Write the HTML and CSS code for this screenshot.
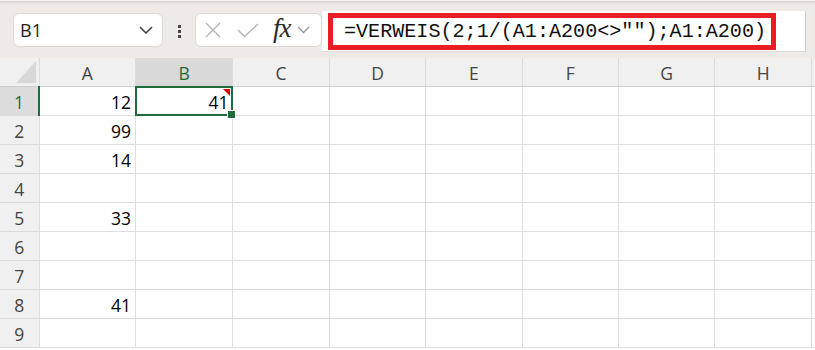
FILE: index.html
```html
<!DOCTYPE html>
<html lang="de">
<head>
    <meta charset="UTF-8">
    <meta name="viewport" content="width=device-width, initial-scale=1.0">
    <title>Tabelle</title>
    <link rel="stylesheet" href="styles.css">
</head>
<body>
    <div class="toolbar">
        <div class="namebox">
            <span class="cellref">B1</span>
            <svg class="chevron" width="14" height="8" viewBox="0 0 14 8"><path d="M1 1 L7 7 L13 1" fill="none" stroke="#444" stroke-width="1.6"/></svg>
        </div>
        <div class="dots"><span></span><span></span><span></span></div>
        <div class="fxbox">
            <svg width="16" height="16" viewBox="0 0 16 16"><path d="M1 1 L15 15 M15 1 L1 15" stroke="#b4b4b4" stroke-width="1.4" fill="none"/></svg>
            <svg width="22" height="15" viewBox="0 0 22 15"><path d="M1 7 L7.5 13.5 L21 1" stroke="#b4b4b4" stroke-width="1.4" fill="none"/></svg>
            <span class="fx">fx</span>
            <svg width="13" height="8" viewBox="0 0 13 8"><path d="M1 1 L6.5 6.5 L12 1" fill="none" stroke="#999" stroke-width="1.3"/></svg>
        </div>
        <div class="formula">
            <span class="formula-text">=VERWEIS(2;1/(A1:A200&lt;&gt;"");A1:A200)</span>
        </div>
    </div>

    <div class="sheet">
        <table class="grid">
            <colgroup>
                <col style="width:39px"><col style="width:96px"><col style="width:97px">
                <col style="width:96px"><col style="width:96px"><col style="width:96px">
                <col style="width:96px"><col style="width:96px"><col style="width:96px">
                <col style="width:40px">
            </colgroup>
            <tr class="head">
                <th class="corner"><span class="tri"></span></th>
                <th>A</th><th class="active-col">B</th><th>C</th><th>D</th><th>E</th><th>F</th><th>G</th><th>H</th><th></th>
            </tr>
            <tr>
                <th class="active-row">1</th>
                <td>12</td><td class="sel">41<span class="note-mark"></span><span class="handle"></span></td><td></td><td></td><td></td><td></td><td></td><td></td><td></td>
            </tr>
            <tr><th>2</th><td>99</td><td></td><td></td><td></td><td></td><td></td><td></td><td></td><td></td></tr>
            <tr><th>3</th><td>14</td><td></td><td></td><td></td><td></td><td></td><td></td><td></td><td></td></tr>
            <tr><th>4</th><td></td><td></td><td></td><td></td><td></td><td></td><td></td><td></td><td></td></tr>
            <tr><th>5</th><td>33</td><td></td><td></td><td></td><td></td><td></td><td></td><td></td><td></td></tr>
            <tr><th>6</th><td></td><td></td><td></td><td></td><td></td><td></td><td></td><td></td><td></td></tr>
            <tr><th>7</th><td></td><td></td><td></td><td></td><td></td><td></td><td></td><td></td><td></td></tr>
            <tr><th>8</th><td>41</td><td></td><td></td><td></td><td></td><td></td><td></td><td></td><td></td></tr>
            <tr><th>9</th><td></td><td></td><td></td><td></td><td></td><td></td><td></td><td></td><td></td></tr>
        </table>
    </div>
</body>
</html>
```

FILE: styles.css
```css
body {
    margin: 0;
    font-family: 'Open Sans', 'Noto Sans', sans-serif;
    background: #ffffff;
    color: #000;
    overflow: hidden;
}
.toolbar {
    display: flex;
    height: 58px;
    box-sizing: border-box;
    padding-left: 13px;
    background: #eeeae8;
    box-shadow: inset 0 3px 2px -1px #dcd8d6;
    border-top: 1px solid #f4f2f1;
}
.namebox {
    margin-top: 12px;
    width: 150px;
    height: 34px;
    box-sizing: border-box;
    background: white;
    border: 1px solid #dcd8d6;
    border-radius: 6px;
    display: flex;
    align-items: center;
    justify-content: space-between;
    padding: 0 9px 0 6px;
}
.cellref {
    font-size: 18px;
    color: #222;
}
.dots {
    width: 32px;
    display: flex;
    flex-direction: column;
    align-items: center;
    gap: 2px;
    padding-top: 24px;
    box-sizing: border-box;
}
.dots span {
    width: 3px;
    height: 3px;
    background: #444;
}
.fxbox {
    margin-top: 12px;
    width: 127px;
    height: 34px;
    box-sizing: border-box;
    background: white;
    border: 1px solid #dcd8d6;
    border-radius: 6px;
    display: flex;
    align-items: center;
    padding-left: 9px;
    gap: 0;
}
.fxbox svg:nth-child(2) {
    margin-left: 16px;
}
.fx {
    font-family: 'Liberation Serif', 'DejaVu Serif', serif;
    font-style: italic;
    font-size: 27px;
    color: #2a2a2a;
    margin-left: 14px;
    margin-top: -4px;
    letter-spacing: -1px;
}
.fxbox svg:last-child {
    margin-left: 6px;
}
.formula {
    margin-top: 10px;
    width: 484px;
    height: 41px;
    box-sizing: border-box;
    background: white;
    border-right: 1px solid #d4d0ce;
    border-bottom: 1px solid #dcd8d6;
    padding: 2px 0 0 6px;
}
.formula-text {
    display: flex;
    align-items: center;
    width: 448px;
    height: 37px;
    box-sizing: border-box;
    border: 5px solid #ea1c24;
    padding-left: 11px;
    font-family: 'Liberation Mono', 'DejaVu Sans Mono', monospace;
    font-size: 20.1px;
    color: #111;
    white-space: nowrap;
}
.sheet {
    width: 815px;
    overflow: hidden;
}
.grid {
    table-layout: fixed;
    border-collapse: collapse;
    width: 852px;
    font-size: 17.5px;
}
.grid th {
    font-weight: normal;
    color: #444;
    background: #f0f0f0;
    border-right: 1px solid #dcdcdc;
    border-bottom: 1px solid #dcdcdc;
    padding: 2px 0 0;
    text-align: center;
}
.grid tr.head {
    height: 28px;
}
.grid tr {
    height: 29px;
}
.grid tr.head th {
    border-bottom: 1px solid #cfcfcf;
}
.grid td {
    border-right: 1px solid #dedede;
    border-bottom: 1px solid #dedede;
    text-align: right;
    padding: 2px 4px 0 0;
    position: relative;
}
.corner {
    position: relative;
}
.tri {
    position: absolute;
    right: 3px;
    bottom: 3px;
    width: 0;
    height: 0;
    border-left: 20px solid transparent;
    border-bottom: 22px solid #d8d8d8;
}
.grid th.active-col {
    background: #d9d9d9;
    color: #1e6b3e;
    border-bottom: 2px solid #1e6b3e;
}
.grid th.active-row {
    background: #dcdcdc;
    color: #1e6b3e;
    border-right: 2px solid #1e6b3e;
}
.grid td.sel::after {
    content: "";
    position: absolute;
    left: -1px;
    top: -1px;
    right: -1px;
    bottom: -1px;
    border: 2px solid #1e6b3e;
}
.note-mark {
    position: absolute;
    top: 2px;
    right: 2px;
    width: 0;
    height: 0;
    border-left: 7px solid transparent;
    border-top: 7px solid #e00000;
}
.handle {
    position: absolute;
    right: -4px;
    bottom: -4px;
    width: 7px;
    height: 7px;
    background: #1e6b3e;
    border: 1px solid white;
    z-index: 2;
}
```
